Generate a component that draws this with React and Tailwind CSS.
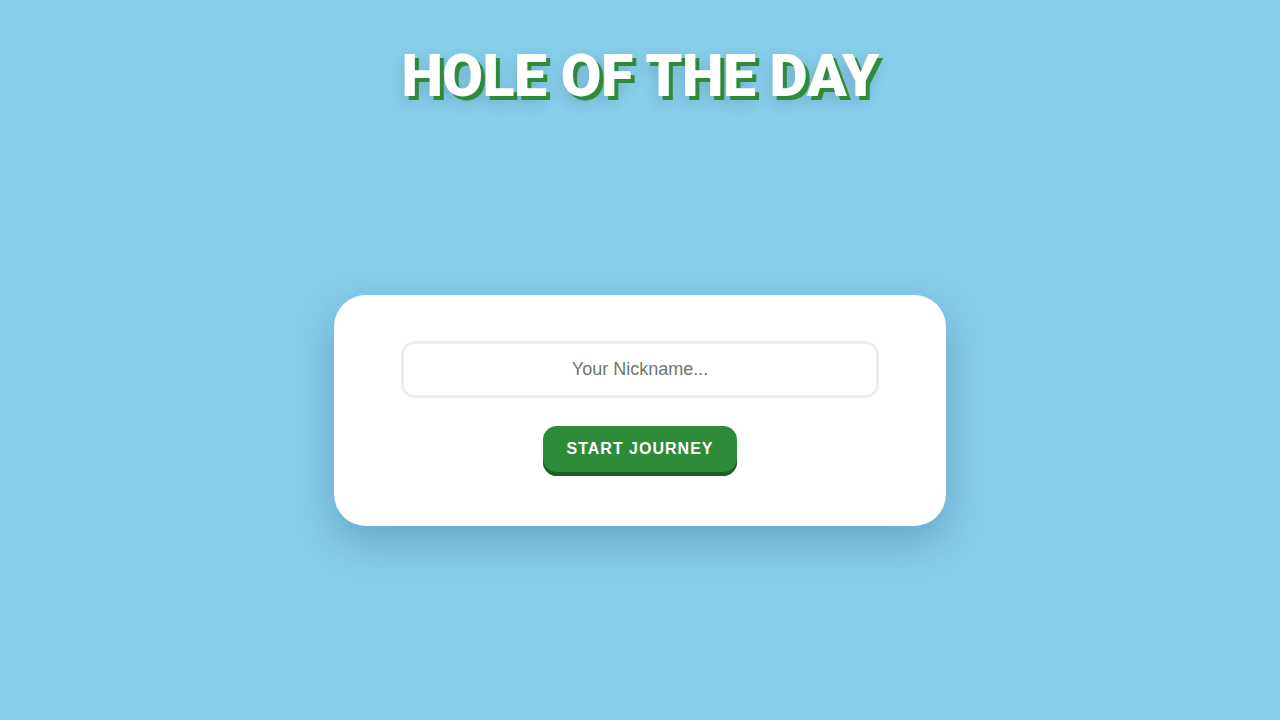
import React from "react";

export default function App() {
  return (
    <div className="min-h-screen w-full bg-[#87ceeb] flex flex-col items-center font-['Liberation_Sans',Arial,sans-serif]">
      <h1 className="mt-[40px] text-[59px] leading-[72px] font-black uppercase text-white tracking-[-0.5px] font-['Roboto',sans-serif] [text-shadow:4px_4px_0_#2e8b3a,0_6px_16px_rgba(0,0,0,0.18)]">
        Hole of the Day
      </h1>

      <div className="flex-1 w-full flex items-center justify-center pb-[12px]">
        <div className="w-[612px] h-[231px] bg-white rounded-[32px] shadow-[0_15px_40px_rgba(40,90,120,0.35)] flex flex-col items-center pt-[46px]">
          <input
            type="text"
            placeholder="Your Nickname..."
            className="w-[478px] h-[57px] rounded-[14px] border-[3px] border-[#eeeeee] text-center text-[18px] text-[#333] placeholder:text-[#6b776b] outline-none"
          />
          <button className="mt-[28px] w-[194px] h-[50px] pb-[4px] rounded-[14px] bg-[#2e8b3a] text-white text-[16px] font-bold tracking-[1px] uppercase shadow-[inset_0_-4px_0_#1f5e27]">
            Start Journey
          </button>
        </div>
      </div>
    </div>
  );
}
